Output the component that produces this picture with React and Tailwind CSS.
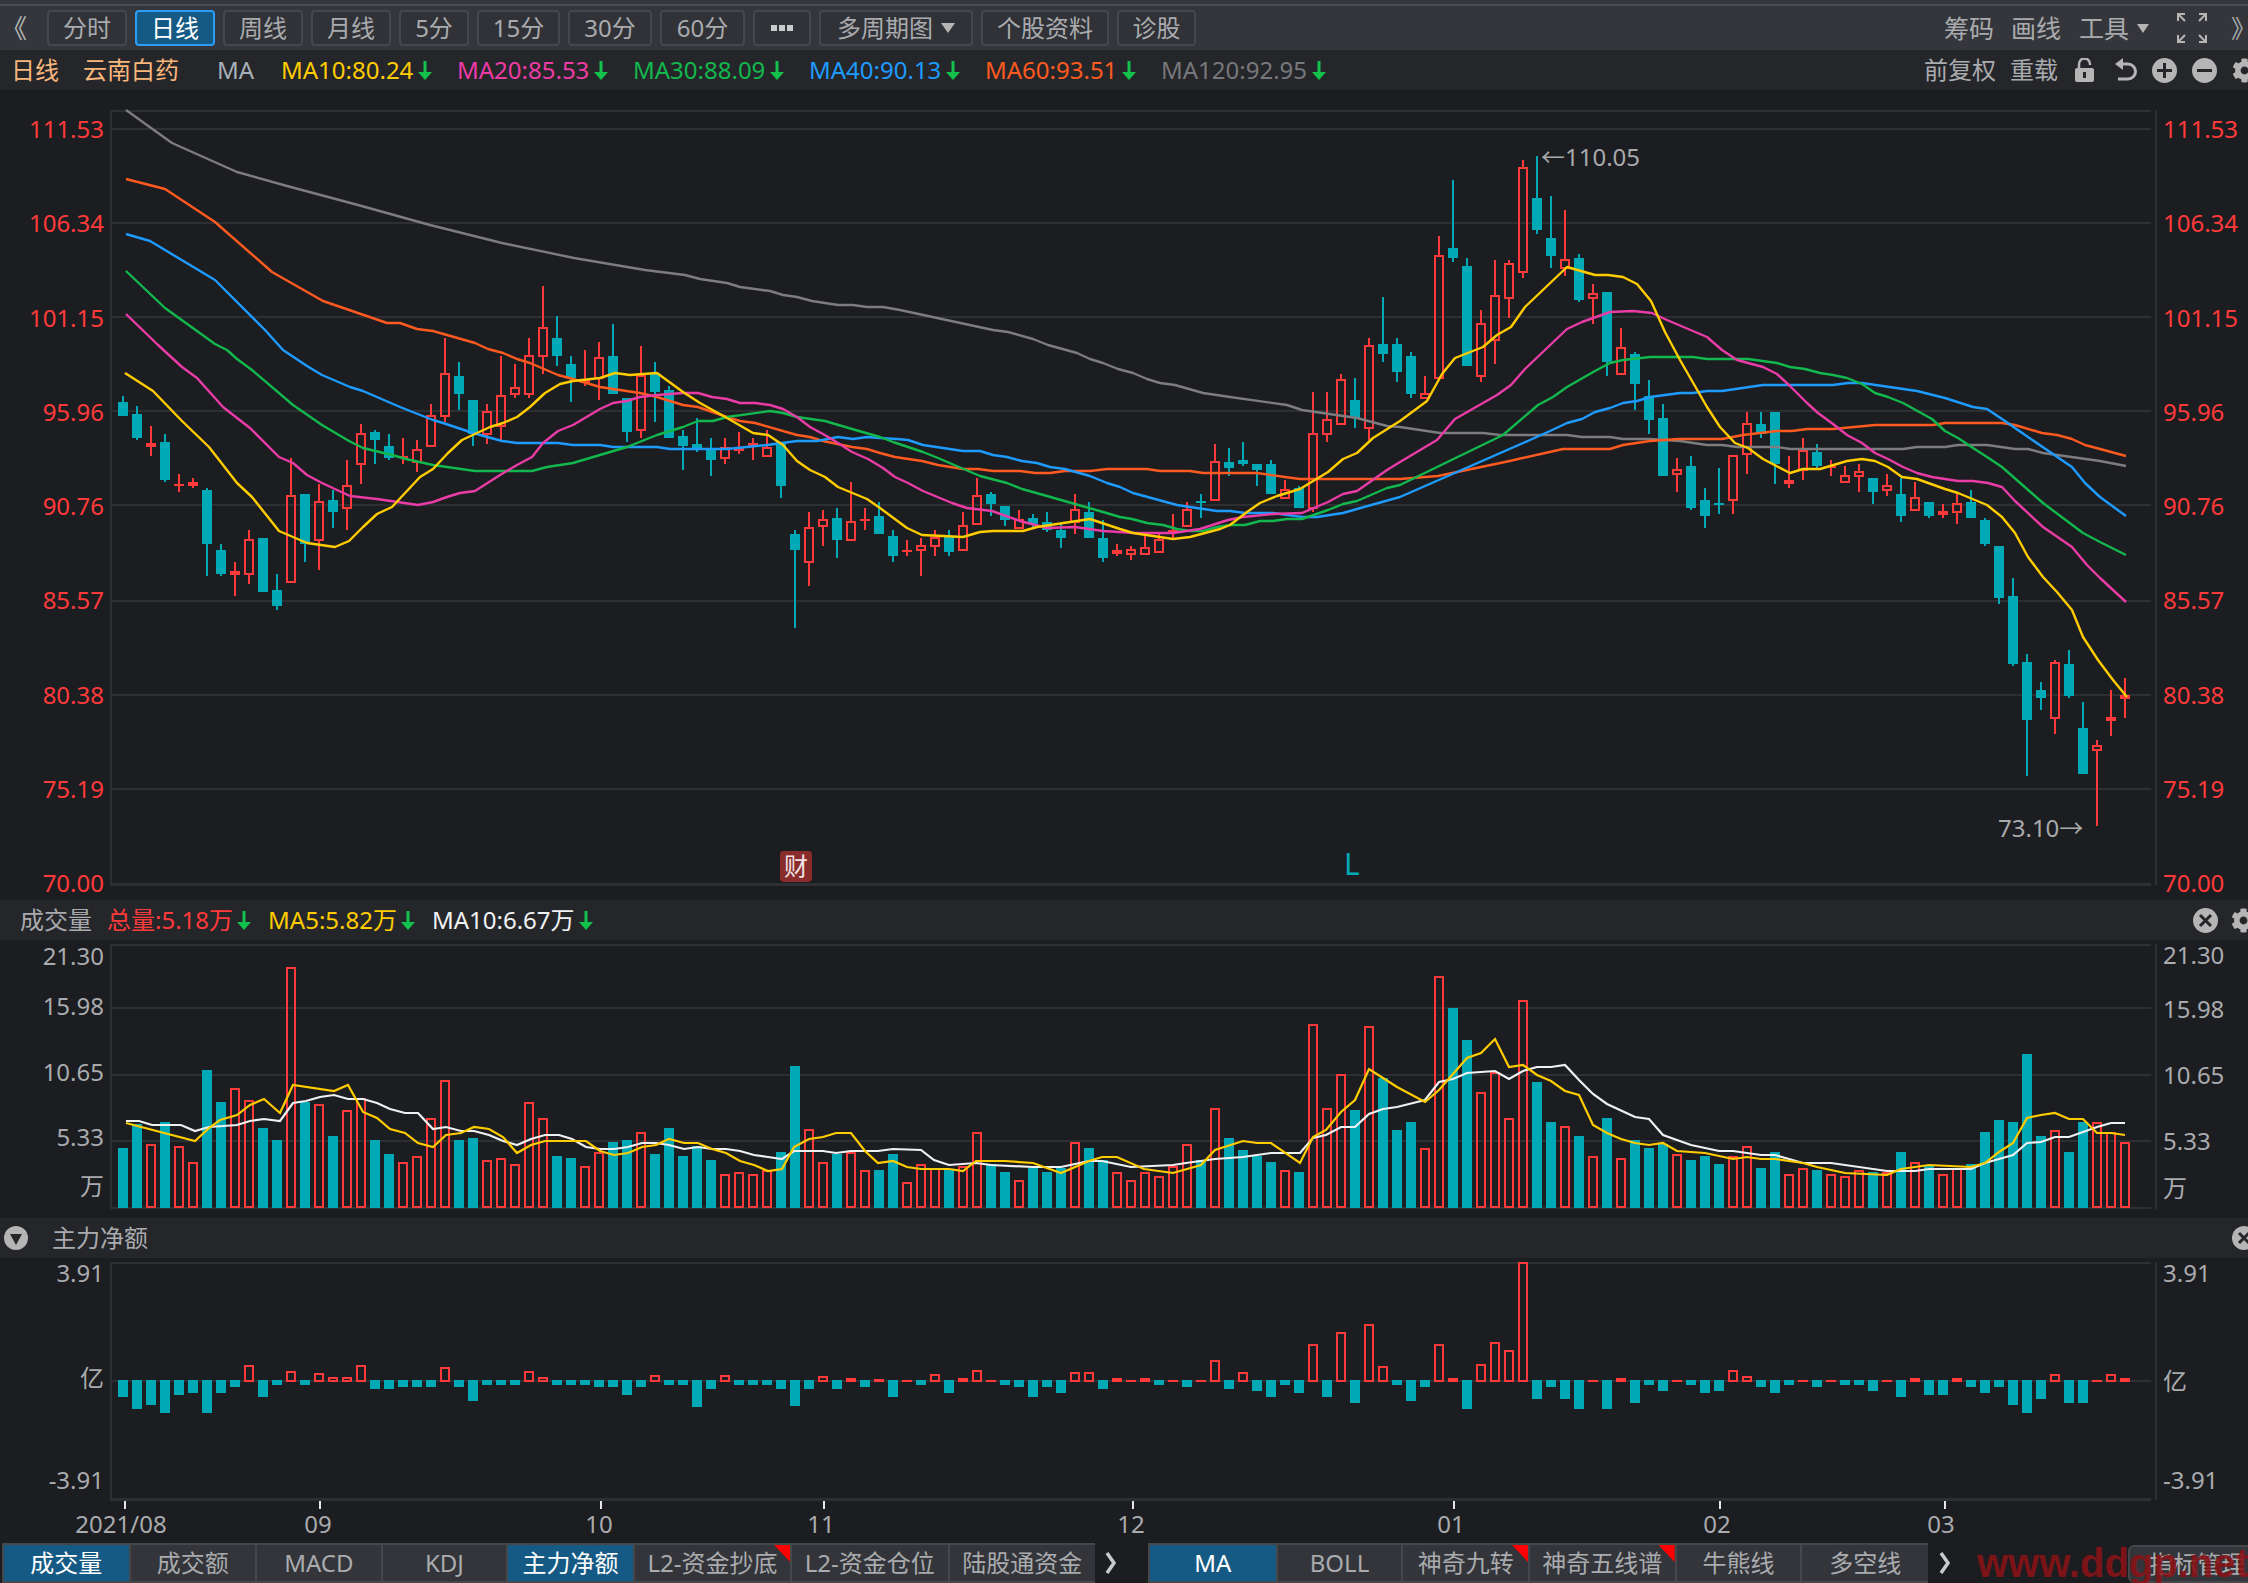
import { FaCog } from "react-icons/fa";

const TEAL = "#00a9b5";
const RED = "#ff3a3a";

// [color 0 teal / 1 red, high, body top, body bottom, low] in page pixels
const CANDLES = [
  [0,396,402,416,416],[0,406,414,438,440],[1,426,443,447,456],[0,434,442,480,482],[1,474,485,485,492],[1,478,482,486,488],
  [0,488,490,544,576],[0,544,550,574,576],[1,562,571,575,596],[1,530,539,575,584],[0,538,538,592,592],[0,574,590,606,610],
  [1,458,495,583,583],[0,494,494,544,562],[1,484,501,541,570],[0,490,500,512,528],[1,460,485,509,530],[1,424,433,465,484],
  [0,430,432,440,464],[0,434,446,458,460],[1,438,457,457,464],[1,440,449,463,472],[1,404,415,447,447],[1,338,373,417,422],
  [0,362,376,394,410],[0,400,400,434,446],[1,404,411,435,444],[1,356,395,427,440],[1,364,387,395,398],[1,338,355,395,398],
  [1,286,327,357,374],[0,316,338,356,366],[0,356,364,378,402],[1,350,379,383,386],[1,342,357,379,400],[0,324,356,394,394],
  [0,398,398,432,442],[1,346,375,431,438],[0,362,373,392,422],[0,386,390,438,438],[0,430,436,446,470],[0,418,444,450,452],
  [0,438,450,460,476],[1,438,447,459,464],[1,432,447,451,454],[1,438,443,447,460],[1,430,447,457,457],[0,442,442,486,498],
  [0,530,534,550,628],[1,512,527,563,586],[1,510,519,527,546],[0,508,518,540,558],[1,482,521,541,541],[1,508,520,520,530],
  [0,502,516,534,534],[0,530,536,556,562],[1,540,551,551,556],[1,538,545,551,576],[1,530,537,547,556],[0,530,536,552,556],
  [1,512,525,551,551],[1,478,495,525,525],[0,492,494,504,516],[0,506,506,520,526],[1,510,519,529,529],[0,514,518,524,527],
  [0,512,522,530,532],[0,524,530,538,548],[1,494,509,523,534],[0,502,512,538,538],[0,520,538,558,562],[1,544,550,554,556],
  [1,546,549,555,560],[1,536,547,555,555],[1,534,539,553,553],[1,514,530,533,538],[1,502,509,527,527],[0,494,502,502,518],
  [1,444,461,501,501],[0,448,462,468,476],[0,442,460,464,466],[0,464,464,470,486],[0,460,464,494,494],[1,480,489,499,499],
  [0,486,488,508,508],[1,392,433,509,512],[1,392,419,435,442],[1,374,379,425,425],[0,378,400,418,428],[1,338,345,429,440],
  [0,297,344,354,362],[0,338,344,372,382],[0,352,356,394,398],[1,376,393,399,399],[1,236,255,379,379],[0,180,248,258,262],
  [0,258,266,366,366],[1,310,323,377,382],[1,260,295,341,364],[1,260,263,299,318],[1,160,167,273,278],[0,156,198,230,234],
  [0,196,238,256,268],[1,210,259,269,276],[0,254,258,300,302],[1,284,293,299,324],[0,292,292,362,376],[1,328,347,375,375],
  [0,352,354,384,410],[0,380,396,420,434],[0,404,418,476,476],[1,458,469,475,492],[0,456,466,508,510],[0,488,500,516,528],
  [0,468,504,504,514],[1,455,455,501,514],[1,412,423,455,474],[0,412,424,434,438],[0,412,412,464,484],[1,456,480,484,488],
  [1,438,450,471,480],[0,444,452,466,468],[1,460,467,467,476],[1,466,475,483,483],[1,464,471,477,492],[0,478,478,492,504],
  [1,474,485,491,496],[0,478,494,516,522],[1,482,497,511,511],[0,502,502,516,518],[1,504,511,515,518],[1,494,503,513,524],
  [0,490,502,518,518],[0,518,520,544,546],[0,546,546,598,604],[0,578,596,664,666],[0,654,662,720,776],[0,682,690,698,710],
  [1,660,662,719,734],[0,650,664,696,698],[0,702,728,774,774],[1,740,745,751,826],[1,690,717,721,736],[1,678,695,699,718],
];

const VOL_TOPS = [
  1148,1124,1144,1122,1146,1162,1070,1102,1088,1100,1128,1140,967,1102,1104,1136,1110,1098,1140,1154,1162,1156,1118,1080,
  1140,1138,1160,1158,1164,1102,1118,1156,1158,1166,1152,1142,1140,1132,1154,1128,1156,1146,1160,1174,1172,1174,1170,1152,
  1066,1129,1162,1154,1152,1170,1170,1154,1182,1164,1168,1170,1166,1132,1164,1172,1180,1168,1172,1168,1142,1148,1160,1172,
  1180,1172,1176,1166,1144,1160,1108,1138,1150,1156,1162,1170,1172,1024,1108,1074,1110,1026,1078,1130,1122,1148,976,1008,
  1040,1092,1072,1118,1000,1082,1122,1126,1136,1156,1118,1158,1140,1148,1144,1154,1160,1156,1164,1156,1146,1168,1152,1174,
  1168,1170,1174,1176,1170,1172,1172,1152,1162,1166,1174,1168,1164,1132,1120,1122,1054,1136,1130,1152,1122,1122,1132,1142,
];

// offset from the zero line, minus goes up in red
const NET = [
  16,28,24,32,14,12,32,12,6,-16,16,4,-10,4,-8,-4,-4,-16,8,8,6,6,6,-14,
  6,20,4,4,4,-10,-4,4,4,4,6,6,14,6,-6,4,4,26,8,-6,4,4,4,8,
  25,8,-5,8,-3,6,-2,16,-1,4,-7,12,-3,-11,-1,4,6,16,6,12,-9,-9,8,-3,
  -1,-3,4,-1,6,-1,-21,8,-9,10,16,4,12,-37,16,-49,22,-57,-15,4,20,6,
  -37,-3,28,-17,-39,-31,-119,18,6,18,28,-1,28,-3,22,4,10,-1,4,12,10,-11,
  -5,6,12,4,-1,6,-1,4,4,10,-1,16,-3,14,14,-3,6,12,6,24,32,18,-7,22,22,-1,-7,-3,
];

const MA_LINES = [
  { color: "#7d7d80", points: "126,110 172,143 237,172 287,186 358,205 430,225 502,243 574,258 645,270 685,275 700,279 727,283 740,287 770,291 783,295 797,297 812,301 838,305 853,305 867,307 883,307 900,310 993,330 1008,332 1033,339 1048,345 1077,353 1090,359 1103,363 1118,369 1133,373 1147,379 1160,383 1175,385 1203,393 1230,397 1287,405 1302,410 1357,418 1387,426 1400,427 1440,433 1483,433 1500,435 1567,435 1582,437 1610,437 1623,439 1650,439 1680,441 1707,445 1722,445 1737,447 1777,447 1790,449 1903,449 1917,447 1945,447 1958,445 1987,445 2015,449 2028,449 2043,453 2100,461 2126,466" },
  { color: "#ff5a1f", points: "126,179 165,189 215,222 272,272 323,301 387,323 400,323 417,329 433,331 475,343 488,349 503,353 517,359 530,363 558,375 573,379 600,387 613,389 640,393 657,397 683,405 698,407 727,417 740,421 755,423 797,435 810,437 823,441 852,447 867,449 880,453 895,457 922,461 938,465 963,469 978,469 993,471 1020,471 1035,473 1050,473 1065,471 1090,471 1107,469 1147,469 1160,471 1190,471 1203,473 1257,473 1285,477 1300,479 1400,479 1438,476 1505,462 1563,449 1610,449 1623,445 1650,441 1678,439 1722,439 1743,435 1777,431 1792,431 1807,429 1833,429 1875,425 1933,425 1945,423 2002,423 2015,425 2042,433 2057,435 2072,439 2085,445 2100,449 2126,456" },
  { color: "#1e9bff", points: "126,234 150,241 215,280 265,330 283,350 307,366 322,375 350,387 363,391 400,407 433,420 443,423 473,433 502,441 517,443 558,443 573,445 600,445 613,447 657,447 670,449 727,449 767,445 797,441 817,441 838,437 853,439 867,437 880,438 897,439 908,440 923,445 963,451 980,451 993,455 1007,457 1022,461 1037,463 1050,467 1065,469 1090,476 1107,483 1120,487 1133,493 1177,505 1190,507 1217,511 1230,511 1245,513 1273,513 1302,517 1317,517 1343,513 1357,509 1400,497 1530,440 1550,431 1567,423 1582,419 1595,412 1610,408 1623,403 1637,401 1650,397 1680,393 1693,393 1707,391 1722,391 1763,385 1833,385 1848,383 1862,383 1917,391 1945,398 1973,407 1987,409 2002,419 2015,428 2028,437 2072,467 2085,483 2100,497 2126,516" },
  { color: "#12b84d", points: "126,271 165,308 215,344 227,350 237,359 252,370 293,405 322,425 349,441 363,448 392,455 406,459 433,465 475,471 532,471 547,467 573,463 600,455 627,447 657,435 683,427 698,421 713,421 727,417 770,411 783,413 797,417 825,421 852,429 880,437 893,442 908,447 923,452 938,458 980,476 1007,483 1022,489 1047,496 1075,504 1103,512 1120,517 1132,519 1147,523 1163,525 1177,529 1190,531 1203,531 1217,527 1230,525 1245,525 1260,521 1273,521 1287,519 1302,519 1328,510 1343,504 1357,501 1387,488 1400,485 1503,435 1538,405 1553,397 1567,387 1595,371 1610,363 1623,360 1650,357 1693,357 1707,359 1748,359 1777,363 1790,367 1805,369 1820,373 1833,375 1847,378 1862,384 1875,393 1888,397 1903,403 1932,419 1945,431 1958,438 1973,448 1987,457 2002,467 2043,503 2083,533 2100,542 2126,555" },
  { color: "#e93ca6", points: "126,314 158,345 182,367 197,378 223,407 237,418 250,428 279,457 293,463 307,475 322,483 350,496 377,499 418,505 433,502 447,497 460,493 475,491 500,475 517,465 532,457 543,443 558,431 573,425 600,409 613,403 627,401 640,397 657,395 683,393 698,393 712,397 727,399 740,403 755,403 770,405 783,409 797,417 810,427 823,434 838,443 852,452 868,459 883,468 895,477 908,483 923,491 952,503 967,508 992,511 1020,521 1047,528 1075,527 1103,531 1135,533 1173,533 1200,529 1228,520 1243,517 1273,514 1302,513 1328,502 1343,494 1357,491 1387,470 1400,462 1437,440 1455,419 1497,395 1511,385 1525,369 1567,329 1582,322 1610,312 1633,311 1652,313 1667,320 1707,337 1722,350 1737,360 1763,367 1777,374 1790,386 1807,403 1818,413 1833,424 1847,435 1862,443 1875,453 1888,459 1903,467 1917,473 1932,477 1958,481 1973,481 1988,483 2002,487 2015,501 2043,527 2072,547 2087,565 2100,578 2126,602" },
  { color: "#ffcc00", points: "125,373 153,391 182,421 209,447 237,483 252,497 279,531 307,543 335,547 349,541 363,527 377,514 392,507 420,477 433,469 448,453 462,440 477,433 490,427 503,423 517,417 530,407 545,393 560,384 573,381 600,378 615,373 630,375 657,373 683,392 700,403 727,418 753,433 768,435 783,445 797,461 810,470 825,477 838,487 867,499 880,508 907,528 922,535 963,537 980,532 993,531 1023,531 1037,527 1090,519 1120,529 1133,533 1173,539 1190,537 1220,529 1230,525 1247,512 1260,503 1277,496 1300,489 1328,472 1343,459 1357,453 1373,438 1400,421 1427,401 1442,374 1455,358 1483,347 1497,335 1511,327 1525,307 1567,267 1595,275 1608,275 1623,277 1637,284 1651,301 1665,332 1680,360 1707,407 1720,427 1735,443 1748,448 1763,459 1790,473 1803,469 1820,469 1847,461 1862,459 1875,461 1888,467 1902,477 1917,479 1945,489 1958,493 1987,505 2002,517 2015,533 2028,557 2043,577 2057,592 2072,610 2083,637 2098,660 2113,680 2127,697" },
];

const VOL_MA5 = "126,1123 195,1141 209,1128 220,1120 237,1115 250,1105 264,1099 280,1113 293,1085 334,1091 348,1085 363,1112 377,1118 390,1129 405,1133 418,1143 433,1147 446,1135 461,1133 474,1127 489,1129 503,1137 517,1153 531,1145 545,1141 586,1141 600,1151 614,1155 628,1153 642,1147 656,1145 669,1139 684,1143 698,1143 712,1149 726,1153 740,1161 754,1165 768,1171 782,1169 794,1147 809,1139 823,1137 836,1133 851,1133 865,1151 878,1163 893,1161 907,1167 921,1169 949,1169 963,1171 976,1161 1005,1161 1033,1163 1061,1173 1089,1161 1102,1157 1117,1157 1144,1169 1173,1173 1201,1165 1215,1150 1243,1141 1257,1143 1271,1143 1300,1163 1313,1137 1326,1130 1341,1112 1355,1100 1369,1069 1383,1078 1397,1087 1425,1102 1439,1090 1467,1058 1481,1053 1495,1039 1509,1067 1523,1065 1537,1075 1551,1081 1565,1091 1579,1095 1593,1125 1607,1133 1621,1139 1635,1143 1649,1145 1663,1143 1677,1151 1705,1153 1733,1159 1747,1157 1761,1159 1775,1159 1803,1163 1817,1167 1845,1173 1887,1175 1901,1169 1929,1165 1971,1167 1985,1163 1999,1152 2013,1143 2027,1118 2041,1115 2055,1113 2069,1119 2083,1119 2097,1133 2111,1133 2125,1135";
const VOL_MA10 = "126,1121 139,1121 152,1125 181,1125 195,1131 209,1127 237,1125 250,1121 264,1119 280,1121 293,1103 306,1101 320,1097 334,1095 348,1099 363,1099 377,1103 390,1109 405,1113 418,1113 433,1129 446,1127 461,1131 474,1131 489,1135 503,1141 517,1145 531,1139 545,1135 559,1135 572,1139 586,1147 600,1149 614,1149 628,1147 642,1143 656,1143 669,1145 684,1149 698,1147 712,1149 726,1149 740,1151 754,1155 768,1157 782,1159 794,1151 823,1151 836,1153 851,1151 878,1151 893,1149 921,1150 934,1160 949,1165 976,1163 991,1165 1033,1167 1061,1167 1089,1161 1102,1161 1131,1167 1173,1165 1186,1163 1215,1159 1243,1157 1271,1153 1300,1153 1313,1138 1326,1135 1341,1127 1355,1127 1369,1114 1383,1109 1397,1107 1425,1100 1439,1082 1453,1079 1467,1073 1495,1071 1509,1079 1523,1071 1537,1067 1551,1067 1565,1065 1579,1080 1593,1094 1607,1104 1635,1117 1649,1119 1663,1135 1691,1145 1719,1151 1733,1151 1761,1155 1775,1155 1803,1163 1831,1163 1887,1171 1915,1171 1929,1169 1971,1169 1985,1163 2013,1155 2027,1143 2041,1142 2055,1137 2069,1137 2097,1127 2111,1123 2125,1123";

const PRICES = ["111.53", "106.34", "101.15", "95.96", "90.76", "85.57", "80.38", "75.19", "70.00"];
const PRICE_GRID = [129, 223, 317, 411, 505, 601, 695, 789];

const DATES = [
  { tick: 125, x: 121, label: "2021/08" },
  { tick: 320, x: 318, label: "09" },
  { tick: 601, x: 599, label: "10" },
  { tick: 824, x: 821, label: "11" },
  { tick: 1133, x: 1131, label: "12" },
  { tick: 1454, x: 1451, label: "01" },
  { tick: 1720, x: 1717, label: "02" },
  { tick: 1945, x: 1941, label: "03" },
];

const LEGEND = [
  { label: "MA10:80.24", color: "text-[#ffcc00]" },
  { label: "MA20:85.53", color: "text-[#ee3ba5]" },
  { label: "MA30:88.09", color: "text-[#12b84d]" },
  { label: "MA40:90.13", color: "text-[#1e9bff]" },
  { label: "MA60:93.51", color: "text-[#ff5a1f]" },
  { label: "MA120:92.95", color: "text-[#77787b]" },
];

const candleX = (i) => 123 + 14 * i;

function DownArrow() {
  return (
    <svg width="14" height="19" viewBox="0 0 14 19" className="shrink-0">
      <path d="M5.5 0h3v11H14l-7 8-7-8h5.5z" fill="#12c24d" />
    </svg>
  );
}

function Chevron() {
  return (
    <svg width="14" height="22" viewBox="0 0 14 22" fill="none" stroke="#c9cacc" strokeWidth="3.5">
      <path d="M3 1l7 10-7 10" />
    </svg>
  );
}

function Candle({ c, i }) {
  const [color, high, top, bottom, low] = c;
  const x = candleX(i);
  const fill = color ? RED : TEAL;
  return (
    <g shapeRendering="crispEdges">
      {high < top && <rect x={x - 1} y={high} width="2" height={top - high} fill={fill} />}
      {bottom < low && <rect x={x - 1} y={bottom} width="2" height={low - bottom} fill={fill} />}
      {top === bottom ? (
        <rect x={x - 5} y={top - 1} width="10" height="2" fill={fill} />
      ) : color ? (
        <rect x={x - 4} y={top + 1} width="8" height={Math.max(bottom - top - 2, 1)} fill="none" stroke={RED} strokeWidth="2" />
      ) : (
        <rect x={x - 5} y={top} width="10" height={bottom - top} fill={TEAL} />
      )}
    </g>
  );
}

function Bar({ x, top, bottom, red }) {
  if (!red) return <rect x={x - 5} y={top} width="10" height={bottom - top} fill={TEAL} shapeRendering="crispEdges" />;
  if (bottom - top < 5) return <rect x={x - 5} y={top} width="10" height={bottom - top} fill={RED} shapeRendering="crispEdges" />;
  return <rect x={x - 4} y={top + 1} width="8" height={bottom - top - 2} fill="none" stroke={RED} strokeWidth="2" shapeRendering="crispEdges" />;
}

function GridLine({ y, w = 2 }) {
  return <rect x="110" y={y - 1} width="2041" height={w} fill="#2e2f33" shapeRendering="crispEdges" />;
}

function Axes({ top, bottom }) {
  return (
    <g shapeRendering="crispEdges">
      <rect x="110" y={top} width="2" height={bottom - top} fill="#2e2f33" />
      <rect x="2155" y={top} width="2" height={bottom - top} fill="#2e2f33" />
    </g>
  );
}

function ToolButton({ className, children, active }) {
  return (
    <div
      className={`flex items-center justify-center h-[36px] rounded-[4px] border-2 ${
        active ? "bg-[#155a85] border-[#2a9df4] text-white" : "bg-[#303237] border-[#45474b] text-[#a9abae]"
      } ${className}`}
    >
      {children}
    </div>
  );
}

function Toolbar() {
  return (
    <div className="h-[50px] shrink-0 bg-[#34363b] relative flex items-center pt-[6px] text-[24px] leading-none">
      <div className="absolute top-[4px] left-0 right-0 h-[2px] bg-[#4b4c51]" />
      <span className="w-[47px] pl-[1px] text-[26px] text-[#b5b6b8]">《</span>
      <div className="flex gap-[8px]">
        <ToolButton className="w-[80px]">分时</ToolButton>
        <ToolButton className="w-[80px]" active>日线</ToolButton>
        <ToolButton className="w-[80px]">周线</ToolButton>
        <ToolButton className="w-[80px]">月线</ToolButton>
        <ToolButton className="w-[70px]">5分</ToolButton>
        <ToolButton className="w-[83px]">15分</ToolButton>
        <ToolButton className="w-[84px]">30分</ToolButton>
        <ToolButton className="w-[85px]">60分</ToolButton>
        <ToolButton className="w-[58px] gap-[2px]">
          <span className="w-[6px] h-[6px] bg-[#c9cacc]" />
          <span className="w-[6px] h-[6px] bg-[#c9cacc]" />
          <span className="w-[6px] h-[6px] bg-[#c9cacc]" />
        </ToolButton>
        <ToolButton className="w-[154px] gap-[8px]">
          多周期图
          <svg width="14" height="10" viewBox="0 0 14 10"><path d="M0 0h14L7 10z" fill="#b5b5b5" /></svg>
        </ToolButton>
        <ToolButton className="w-[128px]">个股资料</ToolButton>
        <ToolButton className="w-[79px]">诊股</ToolButton>
      </div>
      <div className="ml-auto flex items-center text-[#a9abae] text-[25px]">
        <span className="w-[67px]">筹码</span>
        <span className="w-[68px]">画线</span>
        <span>工具</span>
        <svg width="12" height="9" viewBox="0 0 12 9" className="ml-[8px]"><path d="M0 0h12L6 9z" fill="#b5b5b5" /></svg>
        <svg width="30" height="30" viewBox="0 0 30 30" className="ml-[28px]" fill="none" stroke="#b5b5b5" strokeWidth="2">
          <path d="M1 8V1h7M29 8V1h-7M1 22v7h7M29 22v7h-7M2 2l6 6M28 2l-6 6M2 28l6-6M28 28l-6-6" />
        </svg>
        <span className="w-[41px] pl-[24px] overflow-hidden whitespace-nowrap">》</span>
      </div>
    </div>
  );
}

function LegendBar() {
  return (
    <div className="h-[40px] shrink-0 bg-[#25262a] flex items-center text-[24px] leading-none">
      <span className="ml-[11px] text-[#f9b77c]">日线</span>
      <span className="ml-[24px] text-[#f9b77c]">云南白药</span>
      <span className="ml-[38px] w-[64px] text-[#a7b0b8]">MA</span>
      {LEGEND.map((m) => (
        <div key={m.label} className="w-[176px] flex items-center gap-[5px]">
          <span className={m.color}>{m.label}</span>
          <DownArrow />
        </div>
      ))}
      <div className="ml-auto flex items-center text-[#a9abae]">
        <span>前复权</span>
        <span className="ml-[14px]">重载</span>
        <svg width="19" height="24" viewBox="0 0 19 24" className="ml-[17px]">
          <path d="M4 11V6a5.5 5.5 0 0 1 11 0v1" fill="none" stroke="#b5b5b5" strokeWidth="2.5" />
          <rect x="0" y="10" width="19" height="14" rx="2" fill="#b5b5b5" />
          <rect x="8" y="14" width="3" height="6" fill="#25262a" />
        </svg>
        <svg width="23" height="24" viewBox="0 0 23 24" className="ml-[20px]" fill="none" stroke="#b5b5b5" strokeWidth="3">
          <path d="M8 6h6a7.5 7.5 0 0 1 0 15H4" />
          <path d="M9 0v12L1 6z" fill="#b5b5b5" stroke="none" />
        </svg>
        <svg width="25" height="25" viewBox="0 0 25 25" className="ml-[15px]">
          <circle cx="12.5" cy="12.5" r="12.5" fill="#b5b5b5" />
          <path d="M11 5h3v6h6v3h-6v6h-3v-6H5v-3h6z" fill="#25262a" />
        </svg>
        <svg width="25" height="25" viewBox="0 0 25 25" className="ml-[15px]">
          <circle cx="12.5" cy="12.5" r="12.5" fill="#b5b5b5" />
          <rect x="5" y="11" width="15" height="3" fill="#25262a" />
        </svg>
        <FaCog className="ml-[15px] text-[25px] text-[#b5b5b5] -mr-[9px]" />
      </div>
    </div>
  );
}

function PricePanel() {
  return (
    <div className="h-[810px] shrink-0 flex bg-[#1c1d21]">
      <div className="w-[110px] shrink-0 flex flex-col justify-between items-end pr-[6px] pt-[27px] pb-[5px] text-[24px] leading-[24px] text-[#ff3a3a]">
        {PRICES.map((p) => <span key={p}>{p}</span>)}
      </div>
      <svg width="2047" height="810" viewBox="110 90 2047 810" className="shrink-0">
        <GridLine y={111} />
        {PRICE_GRID.map((y) => <GridLine key={y} y={y} />)}
        <GridLine y={884} w={3} />
        <Axes top={110} bottom={885} />
        {CANDLES.map((c, i) => <Candle key={i} c={c} i={i} />)}
        {MA_LINES.map((m) => (
          <polyline key={m.color} points={m.points} fill="none" stroke={m.color} strokeWidth="2.4" strokeLinejoin="round" />
        ))}
        <text x="1541" y="166" fontSize="24" fill="#a8a9ab">←110.05</text>
        <text x="1998" y="837" fontSize="24" fill="#a8a9ab">73.10→</text>
        <rect x="780" y="851" width="32" height="31" rx="4" fill="#8a2c2c" />
        <text x="796" y="875" fontSize="24" fill="#f1e4e4" textAnchor="middle">财</text>
        <text x="1344" y="875" fontSize="30" fill={TEAL}>L</text>
      </svg>
      <div className="flex-1 flex flex-col justify-between pl-[6px] pt-[27px] pb-[5px] text-[24px] leading-[24px] text-[#ff3a3a]">
        {PRICES.map((p) => <span key={p}>{p}</span>)}
      </div>
    </div>
  );
}

function VolumeHeader() {
  return (
    <div className="h-[40px] shrink-0 bg-[#25262a] flex items-center text-[24px] leading-none">
      <span className="ml-[20px] text-[#a9abae]">成交量</span>
      <span className="ml-[15px] text-[#ff3a3a]">总量:5.18万</span>
      <span className="ml-[4px]"><DownArrow /></span>
      <span className="ml-[17px] text-[#ffcc00]">MA5:5.82万</span>
      <span className="ml-[4px]"><DownArrow /></span>
      <span className="ml-[17px] text-[#f0f2f4]">MA10:6.67万</span>
      <span className="ml-[4px]"><DownArrow /></span>
      <div className="ml-auto flex items-center">
        <svg width="25" height="25" viewBox="0 0 25 25">
          <circle cx="12.5" cy="12.5" r="12.5" fill="#b5b5b5" />
          <path d="M7 7l11 11M18 7L7 18" stroke="#25262a" strokeWidth="3" />
        </svg>
        <FaCog className="ml-[13px] text-[25px] text-[#b5b5b5] -mr-[8px]" />
      </div>
    </div>
  );
}

function VolumePanel() {
  return (
    <div className="h-[278px] shrink-0 flex bg-[#1c1d21] text-[24px] leading-[24px] text-[#a9abae]">
      <div className="w-[110px] shrink-0 flex flex-col items-end pr-[6px] pt-[4px]">
        <span>21.30</span>
        <span className="mt-[26px]">15.98</span>
        <span className="mt-[42px]">10.65</span>
        <span className="mt-[41px]">5.33</span>
        <span className="mt-[25px]">万</span>
      </div>
      <svg width="2047" height="278" viewBox="110 940 2047 278" className="shrink-0">
        <GridLine y={945} />
        <GridLine y={1008} />
        <GridLine y={1075} />
        <GridLine y={1141} />
        <GridLine y={1208} />
        <Axes top={944} bottom={1209} />
        {VOL_TOPS.map((top, i) => (
          <Bar key={i} x={candleX(i)} top={top} bottom={1208} red={CANDLES[i][0] === 1} />
        ))}
        <polyline points={VOL_MA10} fill="none" stroke="#eef0f2" strokeWidth="2.2" />
        <polyline points={VOL_MA5} fill="none" stroke="#ffcc00" strokeWidth="2.2" />
      </svg>
      <div className="flex-1 flex flex-col pl-[6px] pt-[3px]">
        <span>21.30</span>
        <span className="mt-[30px]">15.98</span>
        <span className="mt-[42px]">10.65</span>
        <span className="mt-[42px]">5.33</span>
        <span className="mt-[23px]">万</span>
      </div>
    </div>
  );
}

function NetHeader() {
  return (
    <div className="h-[40px] shrink-0 bg-[#25262a] flex items-center text-[24px] leading-none">
      <svg width="24" height="24" viewBox="0 0 24 24" className="ml-[4px]">
        <circle cx="12" cy="12" r="12" fill="#b5b5b5" />
        <path d="M6 8h12l-6 11z" fill="#25262a" />
      </svg>
      <span className="ml-[24px] text-[#a9abae]">主力净额</span>
      <svg width="24" height="24" viewBox="0 0 24 24" className="ml-auto -mr-[8px]">
        <circle cx="12" cy="12" r="12" fill="#b5b5b5" />
        <path d="M7 7l10 10M17 7L7 17" stroke="#25262a" strokeWidth="3" />
      </svg>
    </div>
  );
}

function NetPanel() {
  return (
    <div className="h-[243px] shrink-0 flex bg-[#1c1d21] text-[24px] leading-[24px] text-[#a9abae]">
      <div className="w-[110px] shrink-0 flex flex-col items-end pr-[6px] pt-[3px]">
        <span>3.91</span>
        <span className="mt-[81px]">亿</span>
        <span className="mt-[78px]">-3.91</span>
      </div>
      <svg width="2047" height="243" viewBox="110 1258 2047 243" className="shrink-0">
        <GridLine y={1263} />
        <GridLine y={1381} />
        <GridLine y={1499} w={3} />
        <Axes top={1262} bottom={1500} />
        {NET.map((d, i) =>
          d < 0 ? (
            <Bar key={i} x={candleX(i)} top={1381 + d} bottom={1382} red />
          ) : (
            <Bar key={i} x={candleX(i)} top={1380} bottom={1381 + d} />
          )
        )}
      </svg>
      <div className="flex-1 flex flex-col pl-[6px] pt-[3px]">
        <span>3.91</span>
        <span className="mt-[84px]">亿</span>
        <span className="mt-[75px]">-3.91</span>
      </div>
    </div>
  );
}

function DateAxis() {
  return (
    <svg width="2248" height="42" viewBox="0 1501 2248 42" className="block shrink-0 bg-[#1c1d21]">
      {DATES.map((d) => (
        <g key={d.label}>
          <rect x={d.tick - 1} y="1501" width="2" height="8" fill="#e6e6e6" shapeRendering="crispEdges" />
          <text x={d.x} y="1533" fontSize="24" fill="#a9abae" textAnchor="middle">{d.label}</text>
        </g>
      ))}
    </svg>
  );
}

function Tab({ className, active, flag, children }) {
  return (
    <div
      className={`relative flex items-center justify-center h-[36px] ${
        active ? "bg-[#155a85] text-white" : "bg-[#33353a] text-[#a9abae]"
      } ${className}`}
    >
      {children}
      {flag && <span className="absolute top-0 right-0 w-[16px] h-[17px] bg-[#ff0000] [clip-path:polygon(0_0,100%_0,100%_100%)]" />}
    </div>
  );
}

function TabBar() {
  return (
    <div className="h-[40px] shrink-0 relative bg-[#1c1d21] flex text-[24px] leading-none">
      <div className="ml-[2px] w-[1093px] h-[40px] pt-[2px] pl-[2px] flex gap-[2px] bg-[#45474b]">
        <Tab className="w-[125px]" active>成交量</Tab>
        <Tab className="w-[125px]">成交额</Tab>
        <Tab className="w-[124px]">MACD</Tab>
        <Tab className="w-[124px]">KDJ</Tab>
        <Tab className="w-[125px]" active>主力净额</Tab>
        <Tab className="w-[156px]" flag>L2-资金抄底</Tab>
        <Tab className="w-[156px]">L2-资金仓位</Tab>
        <Tab className="w-[146px]">陆股通资金</Tab>
      </div>
      <div className="w-[53px] pl-[9px] flex items-center"><Chevron /></div>
      <div className="w-[780px] h-[40px] pt-[2px] pl-[2px] flex gap-[2px] bg-[#45474b]">
        <Tab className="w-[126px]" active>MA</Tab>
        <Tab className="w-[124px]">BOLL</Tab>
        <Tab className="w-[125px]" flag>神奇九转</Tab>
        <Tab className="w-[145px]" flag>神奇五线谱</Tab>
        <Tab className="w-[124px]">牛熊线</Tab>
        <Tab className="w-[126px]">多空线</Tab>
      </div>
      <div className="pl-[10px] flex items-center"><Chevron /></div>
      <div className="absolute right-[-8px] top-[2px] w-[128px] h-[38px] flex items-center pl-[19px] rounded-[6px] border-2 border-[#45474b] bg-[#33353a] text-[#a9abae] whitespace-nowrap">
        指标管理
      </div>
      <span className="absolute left-[1977px] top-[-4px] whitespace-nowrap font-['Liberation_Sans',sans-serif] font-bold text-[40px] leading-[48px] text-[#8a1216]/90">
        www.ddgp.net
      </span>
    </div>
  );
}

export default function App() {
  return (
    <div className="w-[2248px] h-[1583px] overflow-hidden flex flex-col bg-[#1c1d21] font-['Noto_Sans','Noto_Sans_CJK_SC',sans-serif]">
      <Toolbar />
      <LegendBar />
      <PricePanel />
      <VolumeHeader />
      <VolumePanel />
      <NetHeader />
      <NetPanel />
      <DateAxis />
      <TabBar />
    </div>
  );
}
